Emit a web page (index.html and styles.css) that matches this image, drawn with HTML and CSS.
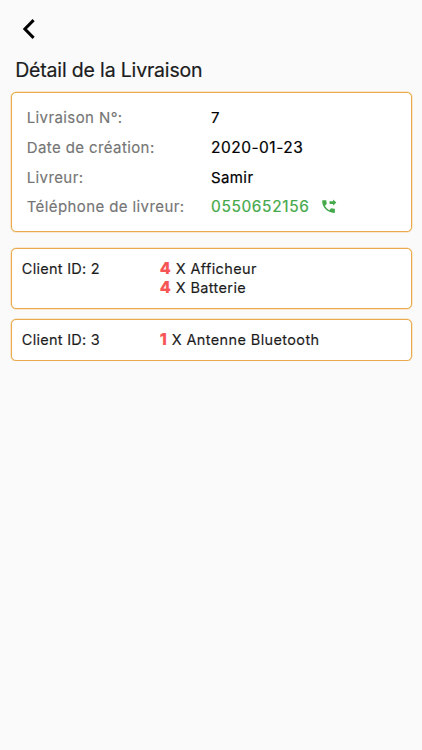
FILE: index.html
```
<!DOCTYPE html>
<html lang="fr">
<head>
    <meta charset="UTF-8" />
    <meta name="viewport" content="width=device-width, initial-scale=1" />
    <title>Détail de la Livraison</title>
    <link rel="stylesheet" href="styles.css">
</head>
<body>
<div class="header">
    <a class="back" href="#" aria-label="Retour">
        <svg width="14" height="20" viewBox="0 0 14 20"><path d="M11.6 1.1 L2.9 10 L11.6 18.9"/></svg>
    </a>
</div>
<h1>Détail de la Livraison</h1>
<div class="card info">
    <ul>
        <li><span class="label">Livraison N°:</span><span class="value">7</span></li>
        <li><span class="label">Date de création:</span><span class="value date">2020-01-23</span></li>
        <li><span class="label">Livreur:</span><span class="value">Samir</span></li>
        <li>
            <span class="label">Téléphone de livreur:</span>
            <a class="value phone" href="tel:0550652156">0550652156
                <svg width="17" height="17" viewBox="0 0 24 24"><path d="M18.5 11L23 6.5L18.5 2V4.7H13.5V8.3H18.5zM20 15.2l-4.3-.7-2.7 2.7c-2.6-1.3-4.7-3.5-6.1-6.1l2.6-2.7L8.8 3H4c-.6 0-1 .5-1 1 0 9.4 7.6 17 17 17 .6 0 1-.5 1-1v-4.8z"/></svg>
            </a>
        </li>
    </ul>
</div>
<div class="card client">
    <span class="name">Client ID: 2</span>
    <ul>
        <li><b>4</b> X Afficheur</li>
        <li><b>4</b> X Batterie</li>
    </ul>
</div>
<div class="card client">
    <span class="name">Client ID: 3</span>
    <ul>
        <li><b>1</b> X Antenne Bluetooth</li>
    </ul>
</div>
</body>
</html>
```

FILE: styles.css
```
* {margin:0; padding:0; box-sizing: border-box;}
ul {list-style: none;}
a {text-decoration: none;}
svg {display: block;}
body {
    background-color: #fafafa;
    color: #1c1c1c;
    font-family: Inter, "Liberation Sans", sans-serif;
    font-size: 15px;
    padding: 0 10px;
}
.header {
    height: 56px;
    padding: 19px 0 0 12px;
}
.back {
    display: inline-block;
}
.back path {
    fill: none;
    stroke: #000;
    stroke-width: 3;
}
h1 {
    font-size: 19.5px;
    font-weight: 400;
    letter-spacing: -.17px;
    line-height: 28px;
    margin-left: 5.2px;
    white-space: nowrap;
    -webkit-text-stroke: .2px;
}
.card {
    background-color: #fff;
    border: 1px solid #e9a94c;
    border-radius: 5px;
    box-shadow: 0 0 0 .5px #f5d6a5;
    width: 401px;
    margin-left: .5px;
}
.info {
    height: 140px;
    margin-top: 8px;
    padding: 10px 15.2px;
}
.info li {
    display: flex;
    align-items: center;
    height: 29.7px;
    letter-spacing: .4px;
    white-space: nowrap;
}
.label {
    width: 184.3px;
    color: #757575;
    -webkit-text-stroke: .15px;
}
.value {
    color: #000;
    -webkit-text-stroke: .2px;
}
.date {
    font-size: 15.5px;
    letter-spacing: .5px;
}
.phone {
    display: flex;
    align-items: center;
    color: #45a94b;
    font-size: 15.5px;
    letter-spacing: .62px;
}
.phone svg {
    margin-left: 10.5px;
    fill: #45a94b;
}
.client {
    display: flex;
    min-height: 42px;
    margin-top: 10px;
    padding: 10px 10.3px;
    font-size: 14.5px;
    line-height: 19.3px;
    letter-spacing: .38px;
    white-space: nowrap;
    -webkit-text-stroke: .15px;
}
.info + .client {
    height: 61px;
    margin-top: 16px;
}
.name {
    width: 138px;
    letter-spacing: .27px;
}
.client b {
    color: #f75555;
    font-size: 16px;
    font-weight: 800;
    line-height: 1;
}
```
